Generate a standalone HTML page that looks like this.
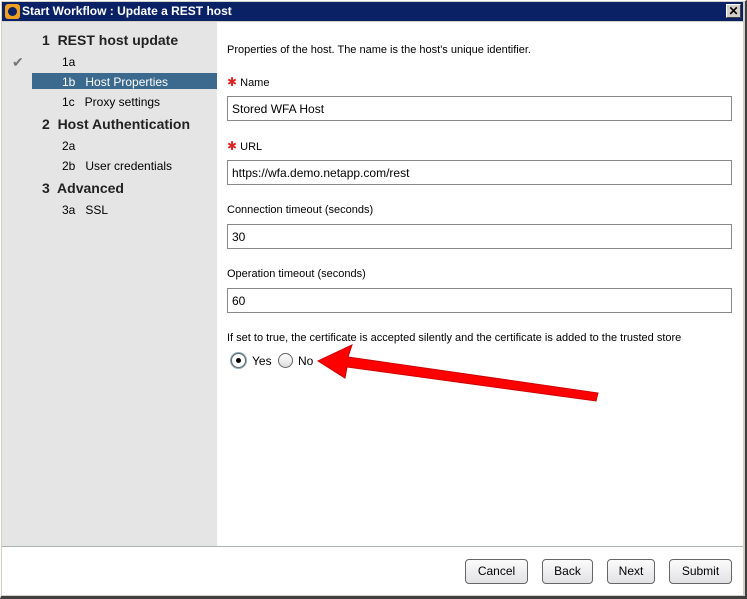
<!DOCTYPE html>
<html><head><style>
body{margin:0;width:747px;height:599px;background:#d4d0c8;position:relative;overflow:hidden;font-family:"Liberation Sans",sans-serif;}
div,span{position:absolute;box-sizing:border-box}
.t{font-size:12px;color:#000;white-space:nowrap}
.h{font-size:14px;font-weight:bold;color:#222;white-space:nowrap}
.in{left:227px;width:505px;height:25px;border:1px solid #888;background:#fff;font-size:12px;padding:5px 4px}
.btn{top:559px;height:25px;border:1px solid #666;border-radius:4px;background:linear-gradient(#fbfbfb,#e2e2e6);font-size:12px;text-align:center;line-height:23px}
.star{color:#d22;font-size:12px}
</style></head><body>
<div style="left:0;top:0;width:747px;height:599px;border-right:2px solid #404040;border-bottom:3px solid #404040;border-left:1px solid #fff;border-top:1px solid #fff"></div>
<div style="left:2px;top:2px;width:741px;height:19px;background:#0a2166"></div>
<div style="left:5px;top:4px;width:15px;height:15px;background:#f0a020;border-radius:3px"></div>
<div style="left:8px;top:7px;width:9px;height:9px;background:#0a2166;border-radius:50%"></div>
<div style="left:22px;top:4px;font-size:12px;font-weight:bold;color:#fff;white-space:nowrap">Start Workflow : Update a REST host</div>
<div style="left:726px;top:4px;width:15px;height:14px;background:#d4d0c8;border:1px solid;border-color:#fff #404040 #404040 #fff;font-size:12px;font-weight:bold;text-align:center;line-height:12px">✕</div>
<div style="left:2px;top:22px;width:741px;height:573px;background:#fff"></div>
<div style="left:2px;top:22px;width:215px;height:524px;background:#e5e5e5"></div>
<div style="left:2px;top:546px;width:741px;height:1px;background:#aab2b2"></div>
<div class="h" style="left:42px;top:32px">1&nbsp; REST host update</div>
<div style="left:12px;top:54px;font-size:14px;color:#777">✔</div>
<div class="t" style="left:62px;top:55px">1a</div>
<div style="left:32px;top:73px;width:185px;height:16px;background:#3b6a8e"></div>
<div class="t" style="left:62px;top:75px;color:#fff">1b&nbsp;&nbsp; Host Properties</div>
<div class="t" style="left:62px;top:95px">1c&nbsp;&nbsp; Proxy settings</div>
<div class="h" style="left:42px;top:116px">2&nbsp; Host Authentication</div>
<div class="t" style="left:62px;top:139px">2a</div>
<div class="t" style="left:62px;top:159px">2b&nbsp;&nbsp; User credentials</div>
<div class="h" style="left:42px;top:180px">3&nbsp; Advanced</div>
<div class="t" style="left:62px;top:203px">3a&nbsp;&nbsp; SSL</div>
<div class="t" style="left:227px;top:44px;font-size:11px">Properties of the host. The name is the host's unique identifier.</div>
<div class="t" style="left:227px;top:75px;font-size:11px"><span class="star" style="position:static">✱</span> Name</div>
<div class="in" style="top:96px">Stored WFA Host</div>
<div class="t" style="left:227px;top:139px;font-size:11px"><span class="star" style="position:static">✱</span> URL</div>
<div class="in" style="top:160px">https://wfa.demo.netapp.com/rest</div>
<div class="t" style="left:227px;top:204px;font-size:11px">Connection timeout (seconds)</div>
<div class="in" style="top:224px">30</div>
<div class="t" style="left:227px;top:268px;font-size:11px">Operation timeout (seconds)</div>
<div class="in" style="top:288px">60</div>
<div class="t" style="left:227px;top:332px;font-size:11px">If set to true, the certificate is accepted silently and the certificate is added to the trusted store</div>
<div style="left:231px;top:353px;width:15px;height:15px;border-radius:50%;border:1px solid #666;background:#fff;box-shadow:0 0 0 1px #8ab"></div>
<div style="left:236px;top:358px;width:5px;height:5px;border-radius:50%;background:#000"></div>
<div class="t" style="left:252px;top:354px">Yes</div>
<div style="left:278px;top:353px;width:15px;height:15px;border-radius:50%;border:1px solid #666;background:linear-gradient(#fff,#ddd)"></div>
<div class="t" style="left:298px;top:354px">No</div>
<svg style="position:absolute;left:0;top:0" width="747" height="599"><polygon points="318,361 352,345 348,357 598,393 596,401 347,367 345,378" fill="#f00" stroke="#c00" stroke-width="1"/></svg>
<div class="btn" style="left:465px;width:63px">Cancel</div>
<div class="btn" style="left:542px;width:51px">Back</div>
<div class="btn" style="left:607px;width:48px">Next</div>
<div class="btn" style="left:669px;width:63px">Submit</div>
</body></html>
